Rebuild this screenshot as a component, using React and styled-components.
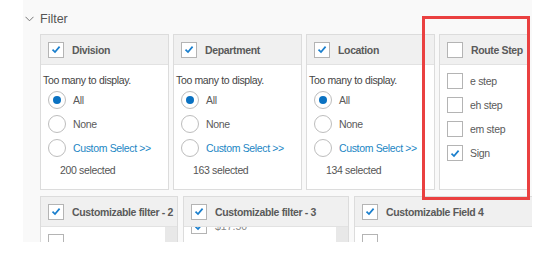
import React from "react";
import styled, { createGlobalStyle } from "styled-components";

const Global = createGlobalStyle`
  html, body { margin: 0; padding: 0; background: #fff; }
  body { font-family: "Liberation Sans", Arial, sans-serif; }
`;

const Page = styled.div`
  display: flex;
  width: 550px;
  height: 256px;
  background: #fff;
`;

const LeftStrip = styled.div`
  width: 23px;
  flex: none;
  background: #fff;
`;

const Main = styled.div`
  position: relative;
  width: 509px;
  height: 242px;
  overflow: hidden;
  background: #f9f9f9;
`;

const FilterHead = styled.div`
  display: flex;
  align-items: center;
  gap: 6px;
  height: 20px;
  margin-top: 9px;
  padding-left: 2px;
  color: #555;
  font-size: 12.5px;
`;

const Cards = styled.div`
  display: flex;
  flex-direction: column;
  gap: 6px;
  margin: 5px 0 0 17px;
`;

const Row = styled.div`
  display: flex;
  gap: ${(p) => p.$gap || 4}px;
  align-items: stretch;
`;

const Card = styled.div`
  width: ${(p) => p.$w}px;
  height: ${(p) => p.$h}px;
  box-sizing: border-box;
  flex: none;
  border: 1px solid #dcdcdc;
  background: #fff;
  display: flex;
  flex-direction: column;
  overflow: hidden;
`;

const CardHead = styled.div`
  position: relative;
  z-index: 1;
  display: flex;
  align-items: center;
  gap: 8px;
  height: 30px;
  flex: none;
  box-sizing: border-box;
  padding-left: 7px;
  background: #f0f0f0;
  border-bottom: 1px solid #e2e2e2;
  font-weight: bold;
  font-size: 10.5px;
  letter-spacing: -0.35px;
  color: #5a5a5a;
  white-space: nowrap;
`;

const Box = styled.span`
  width: 16px;
  height: 16px;
  box-sizing: border-box;
  flex: none;
  border: 1px solid #b4b4b4;
  background: #fff;
  display: inline-flex;
  align-items: center;
  justify-content: center;
`;

const Check = ({ on }) => (
  <Box>
    {on && (
      <svg width="10" height="9" viewBox="0 0 10 9">
        <path d="M1.5 4.6 L4 7 L8.6 1.6" fill="none" stroke="#1a7fcd" strokeWidth="1.7" />
      </svg>
    )}
  </Box>
);

const Body = styled.div`
  display: flex;
  flex-direction: column;
  padding: 8px 0 0 2px;
  font-size: 10.5px;
  letter-spacing: -0.35px;
  color: #444;
`;

const Note = styled.div`
  height: 14px;
  line-height: 14px;
`;

const RadioList = styled.div`
  display: flex;
  flex-direction: column;
  gap: 6px;
  margin-top: 4px;
  padding-left: 5px;
`;

const RadioRow = styled.div`
  display: flex;
  align-items: center;
  gap: 7px;
  height: 18px;
  color: ${(p) => (p.$link ? "#1b86c4" : "#5a5a5a")};
`;

const RadioDot = styled.span`
  width: 18px;
  height: 18px;
  box-sizing: border-box;
  border-radius: 50%;
  border: 1.5px solid #bdbdbd;
  background: #fff;
  display: inline-flex;
  align-items: center;
  justify-content: center;
  &::after {
    content: "";
    width: 8px;
    height: 8px;
    border-radius: 50%;
    background: ${(p) => (p.$on ? "#0a72c2" : "transparent")};
  }
`;

const Count = styled.div`
  margin-top: 7px;
  padding-left: 17px;
  color: #555;
`;

const StepList = styled.div`
  display: flex;
  flex-direction: column;
  gap: 8px;
  padding: 8px 0 0 7px;
`;

const StepRow = styled.div`
  display: flex;
  align-items: center;
  gap: 7px;
  height: 16px;
  font-size: 10.5px;
  letter-spacing: -0.3px;
  color: #5a5a5a;
`;

const PartBody = styled.div`
  position: relative;
  flex: 1;
  display: block;
  padding: 7px 0 0 7px;
`;

const Scroll = styled.div`
  position: absolute;
  right: 0;
  top: 0;
  bottom: 0;
  width: 12px;
  background: #e8e8e8;
`;

const PartRow = styled.div`
  display: flex;
  align-items: center;
  gap: 8px;
  height: 16px;
  margin-top: ${(p) => p.$mt || 0}px;
  font-size: 10.5px;
  color: #888;
`;

const Highlight = styled.div`
  position: absolute;
  left: 399px;
  top: 16px;
  width: 108px;
  height: 184px;
  box-sizing: border-box;
  border: 3px solid #ea4040;
  z-index: 2;
  pointer-events: none;
`;

const Chevron = () => (
  <svg width="9" height="6" viewBox="0 0 9 6">
    <path d="M0.5 0.8 L4.5 4.8 L8.5 0.8" fill="none" stroke="#777" strokeWidth="1" />
  </svg>
);

const radioCard = (title, count) => (
  <Card $w={129} $h={156} key={title}>
    <CardHead>
      <Check on />
      {title}
    </CardHead>
    <Body>
      <Note>Too many to display.</Note>
      <RadioList>
        <RadioRow>
          <RadioDot $on />
          All
        </RadioRow>
        <RadioRow>
          <RadioDot />
          None
        </RadioRow>
        <RadioRow $link>
          <RadioDot />
          Custom Select &gt;&gt;
        </RadioRow>
      </RadioList>
      <Count>{count} selected</Count>
    </Body>
  </Card>
);

export default function App() {
  return (
    <>
      <Global />
      <Page>
        <LeftStrip />
        <Main>
          <FilterHead>
            <Chevron />
            Filter
          </FilterHead>
          <Cards>
            <Row $gap={4}>
              {radioCard("Division", 200)}
              {radioCard("Department", 163)}
              {radioCard("Location", 134)}
              <Card $w={89} $h={156}>
                <CardHead>
                  <Check />
                  Route Step
                </CardHead>
                <StepList>
                  {["e step", "eh step", "em step", "Sign"].map((s) => (
                    <StepRow key={s}>
                      <Check on={s === "Sign"} />
                      {s}
                    </StepRow>
                  ))}
                </StepList>
              </Card>
            </Row>
            <Row $gap={5}>
              <Card $w={138} $h={60}>
                <CardHead>
                  <Check on />
                  Customizable filter - 2
                </CardHead>
                <PartBody>
                  <PartRow>
                    <Check />
                  </PartRow>
                  <Scroll />
                </PartBody>
              </Card>
              <Card $w={166} $h={60}>
                <CardHead>
                  <Check on />
                  Customizable filter - 3
                </CardHead>
                <PartBody>
                  <PartRow $mt={-16}>
                    <Check on />
                    $17.50
                  </PartRow>
                  <Scroll />
                </PartBody>
              </Card>
              <Card $w={200} $h={60}>
                <CardHead>
                  <Check on />
                  Customizable Field 4
                </CardHead>
                <PartBody>
                  <PartRow>
                    <Check />
                  </PartRow>
                </PartBody>
              </Card>
            </Row>
          </Cards>
          <Highlight />
        </Main>
      </Page>
    </>
  );
}
